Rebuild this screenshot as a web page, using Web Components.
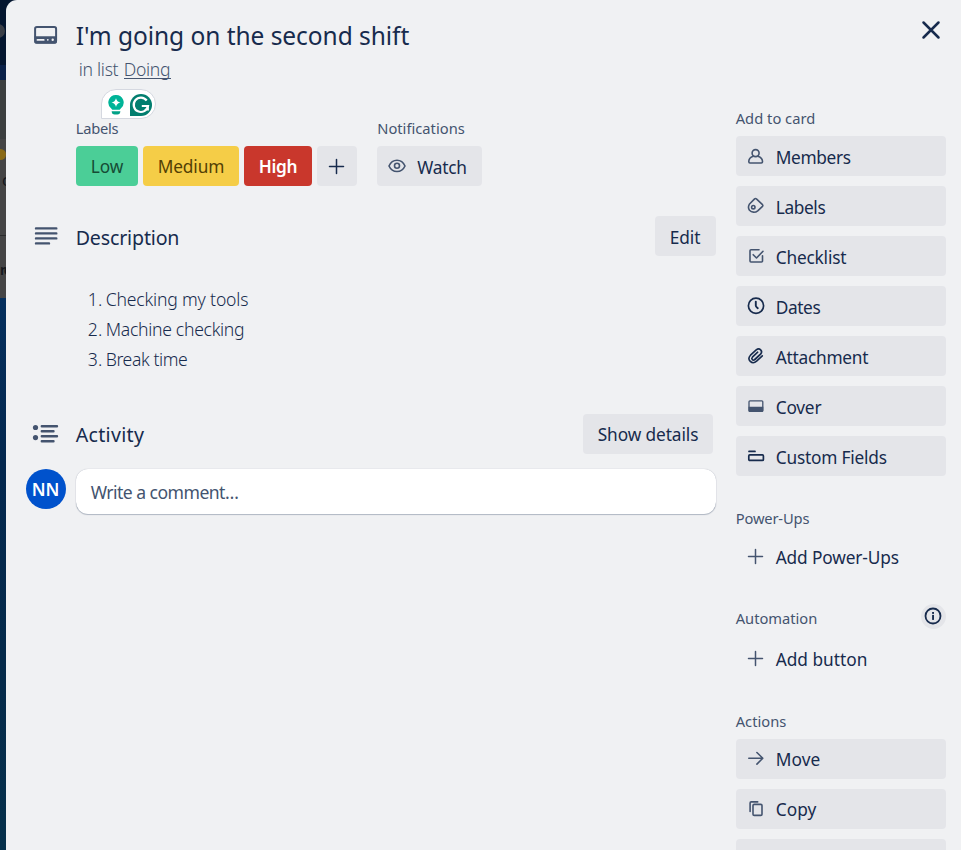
<!DOCTYPE html>
<html lang="en">
<head>
<meta charset="utf-8">
<title>Card</title>
<style>
html,body{margin:0;height:850px;overflow:hidden}
body{font-family:"Noto Sans","Open Sans",sans-serif;color:#172b4d;background:#f0f1f3}
</style>
</head>
<body>
<card-window></card-window>
<script>
const define = (name, html, init) => {
  const t = document.createElement('template');
  t.innerHTML = html;
  customElements.define(name, class extends HTMLElement {
    connectedCallback() {
      if (this.shadowRoot) return;
      this.attachShadow({mode: 'open'}).append(t.content.cloneNode(true));
      if (init) init(this, this.shadowRoot);
    }
  });
};

/* Text that tracks its letters to an exact advance width. */
define('fit-text', `<style>:host{display:inline-block;white-space:nowrap;flex:none}span{display:inline-block;margin-left:-.3px}</style><span><slot></slot></span>`, (el, root) => {
  const s = root.querySelector('span');
  const w = +el.getAttribute('w');
  const n = [...el.textContent].length;
  s.style.letterSpacing = ((w - .4 - s.getBoundingClientRect().width) / n) + 'px';
  el.style.width = w + 'px';
});

const S = 'fill="none" stroke="currentColor"';
const icons = {
  card: [26, 22, `<rect ${S} stroke-width="2" x="2.100" y="3.100" width="21" height="15.700" rx="1.800"/><path fill="currentColor" d="M1.500 12.200H23.700V18a1.500 1.500 0 0 1-1.500 1.500H3a1.500 1.500 0 0 1-1.500-1.500Z"/><g fill="#f0f1f3"><rect x="3.600" y="14.900" width="8" height="1.900" rx=".9"/><circle cx="14.800" cy="15.800" r=".9"/><circle cx="19.700" cy="15.800" r="1.200"/></g>`],
  desc: [26, 22, `<path ${S} stroke-width="2.400" stroke-linecap="round" d="M3 3.400H23.300M3 8.400H23.300M3 13.400H23.300M3 18.400H16"/>`],
  activity: [28, 22, `<g fill="currentColor"><circle cx="3.500" cy="5.500" r="2.600"/><circle cx="3.500" cy="15.600" r="2.600"/></g><path ${S} stroke-width="2.400" stroke-linecap="round" d="M9.800 4.300H25M9.800 9.300H21.500M9.800 14.300H25M9.800 19.300H21.500"/>`],
  close: [20, 20, `<path ${S} stroke-width="2.500" stroke-linecap="round" d="M2.500 2.500L17.500 17.500M17.500 2.500L2.500 17.500"/>`],
  plus: [20, 20, `<path ${S} stroke-width="1.500" stroke-linecap="round" d="M9.500 3.500V17.500M2.500 10.500H16.500"/>`],
  eye: [20, 20, `<g ${S} stroke-width="1.600"><path d="M2 10C5.400 2.300 14.600 2.300 18 10C14.600 17.400 5.400 17.400 2 10Z"/><circle cx="10" cy="9.800" r="2.500"/></g>`],
  user: [20, 20, `<g ${S} stroke-width="1.600" stroke-linejoin="round"><circle cx="9.600" cy="7.100" r="3.500"/><path d="M7.300 10.200C4.100 11.200 2.700 13.700 2.800 15.800C2.800 16.700 3.200 17 4 17H15.300C16.100 17 16.500 16.700 16.500 15.800C16.600 13.700 15 11.200 11.900 10.200"/></g>`],
  tag: [20, 20, `<g ${S} stroke-width="1.600" stroke-linejoin="round"><path d="M8.600 2.900Q9.500 2 10.400 2.900L16.500 8.700Q17.200 9.500 16.500 10.300L11.700 14.800A6 6 0 0 1 3.500 14.300A5.700 5.700 0 0 1 3.300 8.300Z"/><circle cx="7.300" cy="11.200" r="1.700"/></g>`],
  check: [20, 20, `<g ${S} stroke-width="1.600" stroke-linecap="round" stroke-linejoin="round"><path d="M13 3.700H5Q4 3.700 4 4.700V15Q4 16 5 16H15.500Q16.500 16 16.500 15V9.800"/><path d="M7.200 8.700L10.500 12L17 5.300"/></g>`],
  clock: [20, 20, `<g ${S} stroke-width="1.700" stroke-linecap="round"><circle cx="10" cy="9.800" r="7.600"/><path stroke-width="1.900" d="M9.800 5.600V9.500Q9.800 10.300 10.400 10.900L11.800 12.200"/></g>`],
  clip: [20, 20, `<path ${S} stroke-width="1.600" stroke-linecap="round" stroke-linejoin="round" d="M16.300 9.800L10.600 15.200C6 19.300 .4 13.600 4.500 9.200L10.200 3.900C13.500 1.200 17.300 5 14.600 8.200L8.900 13.600C6.900 15.200 4.800 13 6.400 11.200L11.700 6.200M8.200 13.800L13.900 8.600"/>`],
  cover: [20, 20, `<rect ${S} stroke-width="1.300" x="3" y="4.800" width="13.800" height="10.500" rx="1"/><path fill="currentColor" d="M2.500 10.800H17.300V14.800Q17.300 16 16.100 16H3.700Q2.500 16 2.500 14.800Z"/>`],
  fields: [20, 20, `<g ${S} stroke-width="1.700" stroke-linecap="round"><path d="M3 5.400H9"/><rect x="2.800" y="8.900" width="14.600" height="5.500" rx="1"/></g>`],
  info: [20, 20, `<circle ${S} stroke-width="1.800" cx="10" cy="10" r="7.500"/><g fill="currentColor"><rect x="9.100" y="8.900" width="1.900" height="5"/><rect x="9.100" y="6" width="1.900" height="1.900"/></g>`],
  arrow: [20, 20, `<path ${S} stroke-width="1.600" stroke-linecap="round" stroke-linejoin="round" d="M2.800 9.300H16.800M10.900 3.500L16.800 9.300L10.900 15.100"/>`],
  copy: [20, 20, `<g ${S} stroke-width="1.600" stroke-linecap="round"><path d="M4.100 12.500V4Q4.100 2.900 5.200 2.900H11.700"/><rect x="7" y="5.400" width="9" height="11" rx="1.200"/></g>`],
  bulb: [18, 22, `<path fill="#00b498" d="M9 1A7.500 7.500 0 0 1 14 14.200L12.700 15.800H5.300L4 14.200A7.500 7.500 0 0 1 9 1Z"/><path fill="#fff" d="M9 4.300Q9.800 7.900 13.500 8.600Q9.800 9.300 9 13Q8.200 9.300 4.500 8.600Q8.200 7.900 9 4.300Z"/><path fill="#00a187" d="M4.700 17.200H13.300V18Q12.900 20.500 10.500 20.500H7.500Q5.100 20.500 4.700 18Z"/>`],
  grammar: [24, 24, `<path fill="#027e6f" d="M1 23V12A11 11 0 1 1 12 23Z"/><path ${S} style="color:#fff" stroke-width="2.200" d="M17.700 7.500A7.200 7.200 0 1 0 19 13H12.800M18.800 13V17.500"/>`]
};
define('ui-icon', `<style>:host{display:inline-flex;flex:none}svg{display:block}</style>`, (el, root) => {
  const icon = icons[el.getAttribute('name')];
  if (!icon) return;
  const [w, h, body] = icon;
  root.innerHTML += `<svg width="${w}" height="${h}" viewBox="0 0 ${w} ${h}">${body}</svg>`;
});

define('ui-button', `<style>
:host{display:flex;box-sizing:border-box;height:40px;padding:3px 0 0 15px;align-items:center;background:#e4e5e9;border-radius:4px;font-size:17.3px;font-weight:450;line-height:24px;flex:none}
</style><slot></slot>`);

define('side-button', `<style>
:host{display:flex;box-sizing:border-box;height:40px;padding-left:10px;align-items:center;background:#e4e5e9;border-radius:4px;font-size:17.3px;font-weight:450;line-height:24px}
:host([plain]){background:none}
ui-icon{margin-right:10px;color:#44546f}
:host([dark]) ui-icon{color:#172b4d}
.t{padding-top:3px;display:flex}
:host([high]) .t{padding-top:1px}
</style><ui-icon></ui-icon><span class="t"><slot></slot></span>`, (el, root) => {
  const i = document.createElement('ui-icon');
  i.setAttribute('name', el.getAttribute('icon') || '');
  root.querySelector('ui-icon').replaceWith(i);
});

define('small-heading', `<style>
:host{display:flex;justify-content:space-between;height:20px;line-height:var(--heading-line,20px);font-size:14.700px;font-weight:450;color:#44546f}
</style><slot></slot>`);

define('section-row', `<style>
:host{display:grid;grid-template-columns:70px 1fr}
.icon{display:flex;justify-content:flex-end}
</style><div class="icon"><slot name="icon"></slot></div><div><slot></slot></div>`);

define('side-bar', `<style>
:host{display:block;width:210px;padding-top:109px;--heading-line:18px}
small-heading{margin:33px 0 7px}
small-heading:first-of-type{margin-top:0}
.list{display:grid;gap:10px}
.info{box-sizing:border-box;width:25px;height:25px;padding:2px;border-radius:50%;background:#e4e5e9;display:flex;color:#172b4d;margin-top:-5px}
</style>
<small-heading><fit-text w="80">Add to card</fit-text></small-heading>
<div class="list">
<side-button icon="user"><fit-text w="75.5">Members</fit-text></side-button>
<side-button icon="tag"><fit-text w="50">Labels</fit-text></side-button>
<side-button icon="check"><fit-text w="71">Checklist</fit-text></side-button>
<side-button icon="clock" dark><fit-text w="45">Dates</fit-text></side-button>
<side-button icon="clip" dark><fit-text w="93">Attachment</fit-text></side-button>
<side-button icon="cover"><fit-text w="46">Cover</fit-text></side-button>
<side-button icon="fields" dark><fit-text w="111.5">Custom Fields</fit-text></side-button>
</div>
<small-heading><fit-text w="74">Power-Ups</fit-text></small-heading>
<side-button plain icon="plus"><fit-text w="123.5">Add Power-Ups</fit-text></side-button>
<small-heading style="margin-bottom:9px"><fit-text w="82">Automation</fit-text><span class="info"><ui-icon name="info"></ui-icon></span></small-heading>
<side-button plain icon="plus"><fit-text w="92">Add button</fit-text></side-button>
<small-heading style="margin-top:34px"><fit-text w="51">Actions</fit-text></small-heading>
<div class="list">
<side-button icon="arrow" high><fit-text w="45">Move</fit-text></side-button>
<side-button icon="copy" high><fit-text w="41">Copy</fit-text></side-button>
<side-button></side-button>
</div>`);

define('card-main', `<style>
:host{display:block;width:711px;color:#172b4d}
ui-icon{color:#44546f}
.title{font-size:24.500px;font-weight:450;line-height:34px;padding-top:19px;height:34px}
.in{display:flex;gap:5px;padding:4px 0 1px 3px;font-size:17.600px;line-height:24px;height:24px;font-weight:340;color:#44546f}
.in u{text-decoration:none;border-bottom:1px solid #44546f;height:21px;line-height:24px;display:block}
.badge{box-sizing:border-box;width:55px;height:30px;margin:7px 0 0 25px;border:1px solid #d5d8e0;border-radius:15px 15px 15px 0;background:#fff;display:flex;align-items:center;gap:4px;padding:1px 0 0 5px}
.groups{display:flex;gap:20px;margin-top:-1px}
.row{display:flex;gap:5px;margin-top:8px}
.head{display:flex;justify-content:space-between;font-size:19.600px;font-weight:450;line-height:28px}
.head>fit-text{margin-top:8px}
.low,.medium,.high{border-radius:4px;padding-top:1px}
.low{width:62px;background:#4bce97;color:#164b35}
.medium{width:96px;background:#f5cd47;color:#533f04}
.high{width:68px;background:#c9372c;color:#fff;font-weight:600}
.plus{width:40px;padding:0 0 0 10px;justify-content:flex-start}
.plus ui-icon{color:#172b4d}
ol{list-style:none;margin:0;padding:28px 0 1px 12px;font-size:17.600px;font-weight:340;line-height:30px}
li{display:flex;height:30px}
li fit-text:first-child{margin-right:3px}
.comment{box-sizing:border-box;width:640px;height:45px;border-radius:12px;background:#fff;box-shadow:0 1px 1px #091e4240,0 0 1px #091e424f;padding:11px 0 0 15px;font-size:17.600px;line-height:24px;font-weight:370;color:#44546f}
.avatar{width:40px;height:40px;border-radius:50%;background:#0052cc;color:#fff;display:flex;align-items:center;justify-content:center;font-size:17.500px;font-weight:560;margin-right:10px}
</style>
<section-row><ui-icon slot="icon" name="card" style="margin:24px 17px 0 0"></ui-icon>
<div class="title"><fit-text w="334">I'm going on the second shift</fit-text></div>
<div class="in"><fit-text w="40">in list</fit-text><u><fit-text w="47">Doing</fit-text></u></div>
<div class="badge"><ui-icon name="bulb"></ui-icon><ui-icon name="grammar"></ui-icon></div>
<div class="groups">
<div><small-heading><fit-text w="43">Labels</fit-text></small-heading>
<div class="row"><ui-button class="low"><fit-text w="33">Low</fit-text></ui-button><ui-button class="medium"><fit-text w="67">Medium</fit-text></ui-button><ui-button class="high"><fit-text w="39">High</fit-text></ui-button><ui-button class="plus"><ui-icon name="plus"></ui-icon></ui-button></div></div>
<div><small-heading><fit-text w="88" style="margin-left:.5px">Notifications</fit-text></small-heading>
<div class="row"><ui-button style="width:105px;padding-left:10px"><ui-icon name="eye" style="margin:-3px 10.500px 0 0"></ui-icon><fit-text w="50">Watch</fit-text></ui-button></div></div>
</div>
</section-row>
<section-row style="margin-top:30px"><ui-icon slot="icon" name="desc" style="margin:9px 17px 0 0"></ui-icon>
<div class="head" style="padding-right:1px"><fit-text w="104">Description</fit-text><ui-button style="width:61px"><fit-text w="31">Edit</fit-text></ui-button></div>
<ol><li><fit-text w="15">1.</fit-text><fit-text w="143">Checking my tools</fit-text></li><li><fit-text w="15">2.</fit-text><fit-text w="139">Machine checking</fit-text></li><li><fit-text w="15">3.</fit-text><fit-text w="82">Break time</fit-text></li></ol>
</section-row>
<section-row style="margin-top:39px"><ui-icon slot="icon" name="activity" style="margin:8px 16px 0 0"></ui-icon>
<div class="head" style="padding-right:4px"><fit-text w="69" style="margin-top:7px">Activity</fit-text><ui-button style="width:130px;padding-top:2px"><fit-text w="101">Show details</fit-text></ui-button></div>
</section-row>
<section-row style="margin-top:15px"><div slot="icon" class="avatar"><fit-text w="28">NN</fit-text></div>
<div class="comment"><fit-text w="148">Write a comment…</fit-text></div>
</section-row>`);

define('back-drop', `<style>
:host{position:absolute;inset:0 auto 0 0;width:20px;overflow:hidden;display:flex;flex-direction:column;background:#04254a}
.nav{position:relative;height:65px;background:#04162f}
.nav::before{content:"";position:absolute;left:-9px;top:24px;width:14px;height:14px;border-radius:50%;background:#3a3f47}
.bar{height:15px;background:#0a2148}
.list{background:linear-gradient(#3c3f3f 0 59px,#454545 59px);height:218px;position:relative}
i{position:absolute;left:-14px;top:69px;width:20px;height:11px;border-radius:6px;background:#8a6a16}
p{position:absolute;margin:0;font-size:16px;line-height:20px;color:#14171c}
hr{position:absolute;top:155px;left:0;width:20px;height:1px;border:0;margin:0;background:#2b2c2d}
.sea{flex:1;background:linear-gradient(#052f5d,#04284e 30%,#052a4a 65%,#06304b)}
</style><div class="nav"></div><div class="bar"></div><div class="list"><i></i><p style="left:2px;top:90px">c</p><hr><p style="left:0;top:180px;font-size:14px;letter-spacing:-2px;font-weight:600">ro</p></div><div class="sea"></div>`);

define('card-window', `<style>
:host{display:block;position:relative;height:850px;width:961px;overflow:hidden}
.card{position:relative;display:flex;gap:19px;height:850px;margin-left:6px;background:#f0f1f3;border-radius:11px 0 0 0;overflow:hidden}
.close{position:absolute;right:20px;top:20px}
</style><back-drop></back-drop><div class="card"><card-main></card-main><side-bar></side-bar><ui-icon class="close" name="close"></ui-icon></div>`);
</script>
</body>
</html>
